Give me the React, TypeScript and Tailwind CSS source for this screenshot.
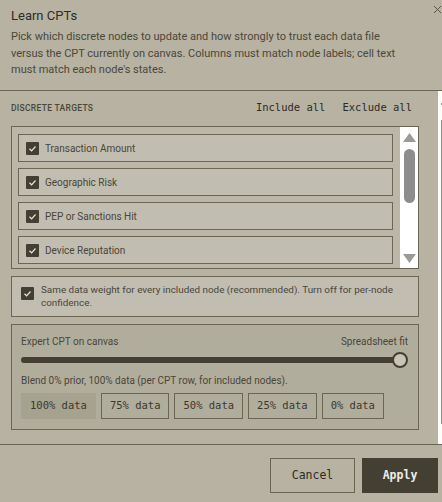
import React from "react";

const Check = () => (
  <span className="w-[13px] h-[13px] shrink-0 bg-[#443f33] rounded-[1px] flex items-center justify-center">
    <svg width="9" height="9" viewBox="0 0 9 9" fill="none">
      <polyline points="1.5,4.8 3.6,6.8 7.5,2.5" stroke="#e8e5dc" strokeWidth="1.2" fill="none" />
    </svg>
  </span>
);

const items = ["Transaction Amount", "Geographic Risk", "PEP or Sanctions Hit", "Device Reputation", "Velocity Score"];
const weights = ["100% data", "75% data", "50% data", "25% data", "0% data"];

export default function App() {
  const mono = "font-['DejaVu_Sans_Mono',monospace]";
  return (
    <div className="w-[442px] h-[502px] overflow-hidden bg-[#b7b2a1] relative font-['Roboto',sans-serif] text-[#3f3b31]">
      {/* header */}
      <div className="h-[91px] border-b border-[#6b6653] pl-[11px] pt-[6px]">
        <h2 className="text-[13px] leading-[20px] text-[#2f2c25]">Learn CPTs</h2>
        <p className="mt-[3px] text-[11px] leading-[16.5px] text-[#4b473b] whitespace-nowrap">
          Pick which discrete nodes to update and how strongly to trust each data file
          <br />
          versus the CPT currently on canvas. Columns must match node labels; cell text
          <br />
          must match each node's states.
        </p>
      </div>
      <button className="absolute top-[4px] left-[432px] w-[10px] h-[10px] flex items-center justify-center">
        <svg width="9" height="9" viewBox="0 0 9 9">
          <path d="M1 1L8 8M8 1L1 8" stroke="#5a5647" strokeWidth="1" />
        </svg>
      </button>

      {/* body */}
      <div className="flex h-[353px]">
        <div className="w-[438px] pl-[11px] pr-[19px] pt-[9px]">
          <div className="flex items-center h-[16px]">
            <span className="text-[8.5px] tracking-[0.3px] text-[#4b4739] font-medium">DISCRETE TARGETS</span>
            <div className={`ml-auto flex gap-[17px] mr-[7px] text-[10.5px] text-[#2e2b24] ${mono}`}>
              <span>Include all</span>
              <span>Exclude all</span>
            </div>
          </div>

          <div className="mt-[10px] h-[143px] border border-[#6b6653] bg-[#bbb7a8] flex">
            <div className="flex-1 pl-[6px] pr-[7px] pt-[7px] flex flex-col gap-[6px] overflow-hidden">
              {items.map((t) => (
                <div key={t} className="h-[28px] shrink-0 border border-[#6b6653] bg-[#c1bdb0] flex items-center pl-[7px] gap-[6px]">
                  <Check />
                  <span className="text-[10px] text-[#4a463a]">{t}</span>
                </div>
              ))}
            </div>
            <div className="w-[18px] bg-white flex flex-col items-center pt-[6px] pb-[5px]">
              <svg width="13" height="9" viewBox="0 0 13 9"><polygon points="6.5,0 13,9 0,9" fill="#9a9a9a" /></svg>
              <div className="mt-[7px] w-[11px] h-[54px] rounded-full bg-[#8d8d8d]" />
              <div className="flex-1" />
              <svg width="13" height="9" viewBox="0 0 13 9"><polygon points="0,0 13,0 6.5,9" fill="#9a9a9a" /></svg>
            </div>
          </div>

          <div className="mt-[7px] border border-[#6b6653] bg-[#c1bdb0] flex items-start gap-[7px] pl-[9px] pr-[4px] pt-[6px] pb-[7px]">
            <span className="mt-[4px] shrink-0"><Check /></span>
            <p className="flex-1 min-w-0 text-[9.9px] leading-[13px] text-[#4a463a]">
              Same data weight for every included node (recommended). Turn off for per-node confidence.
            </p>
          </div>

          <div className="mt-[7px] h-[106px] border border-[#6b6653] bg-[#b1ad9c] pl-[9px] pr-[10px] pt-[10px]">
            <div className="flex justify-between text-[10px] leading-[13px] text-[#4a463a]">
              <span>Expert CPT on canvas</span>
              <span>Spreadsheet fit</span>
            </div>
            <div className="mt-[4px] h-[16px] flex items-center relative">
              <div className="flex-1 h-[6px] rounded-full bg-[#443f33] mr-[7px]" />
              <div className="absolute right-0 top-0 w-[16px] h-[16px] rounded-full border-2 border-[#443f33] bg-[#c8c4b6]" />
            </div>
            <p className="mt-[6px] text-[10px] leading-[13px] text-[#4a463a]">
              Blend 0% prior, 100% data (per CPT row, for included nodes).
            </p>
            <div className={`mt-[6px] flex gap-[5px] text-[10.5px] ${mono}`}>
              {weights.map((w, i) => (
                <span
                  key={w}
                  className={
                    i === 0
                      ? "h-[26px] px-[8px] flex items-center bg-[#a6a290] border border-[#a6a290] text-[#3a372e]"
                      : "h-[26px] px-[8px] flex items-center border border-[#6b6653] text-[#3a372e]"
                  }
                >
                  {w}
                </span>
              ))}
            </div>
          </div>
        </div>
        <div className="w-[4px] bg-[#fdfdfd] flex flex-col">
          <div className="h-[12px]" />
          <div className="h-[2px] w-[1px] ml-[3px] bg-[#8d8d8d]" />
          <div className="h-[15px]" />
          <div className="flex-1 w-[1px] ml-[3px] bg-[#8d8d8d]" />
          <div className="h-[20px]" />
        </div>
      </div>

      {/* footer */}
      <div className="border-t border-[#6b6653] flex justify-end gap-[7px] pt-[13px] pr-[4px]">
        <button className={`h-[35px] w-[85px] border border-[#6b6653] text-[11.5px] text-[#2e2b24] ${mono}`}>Cancel</button>
        <button className={`h-[35px] w-[76px] bg-[#443f33] text-[11.5px] font-bold text-[#f0ede4] ${mono}`}>Apply</button>
      </div>
    </div>
  );
}
